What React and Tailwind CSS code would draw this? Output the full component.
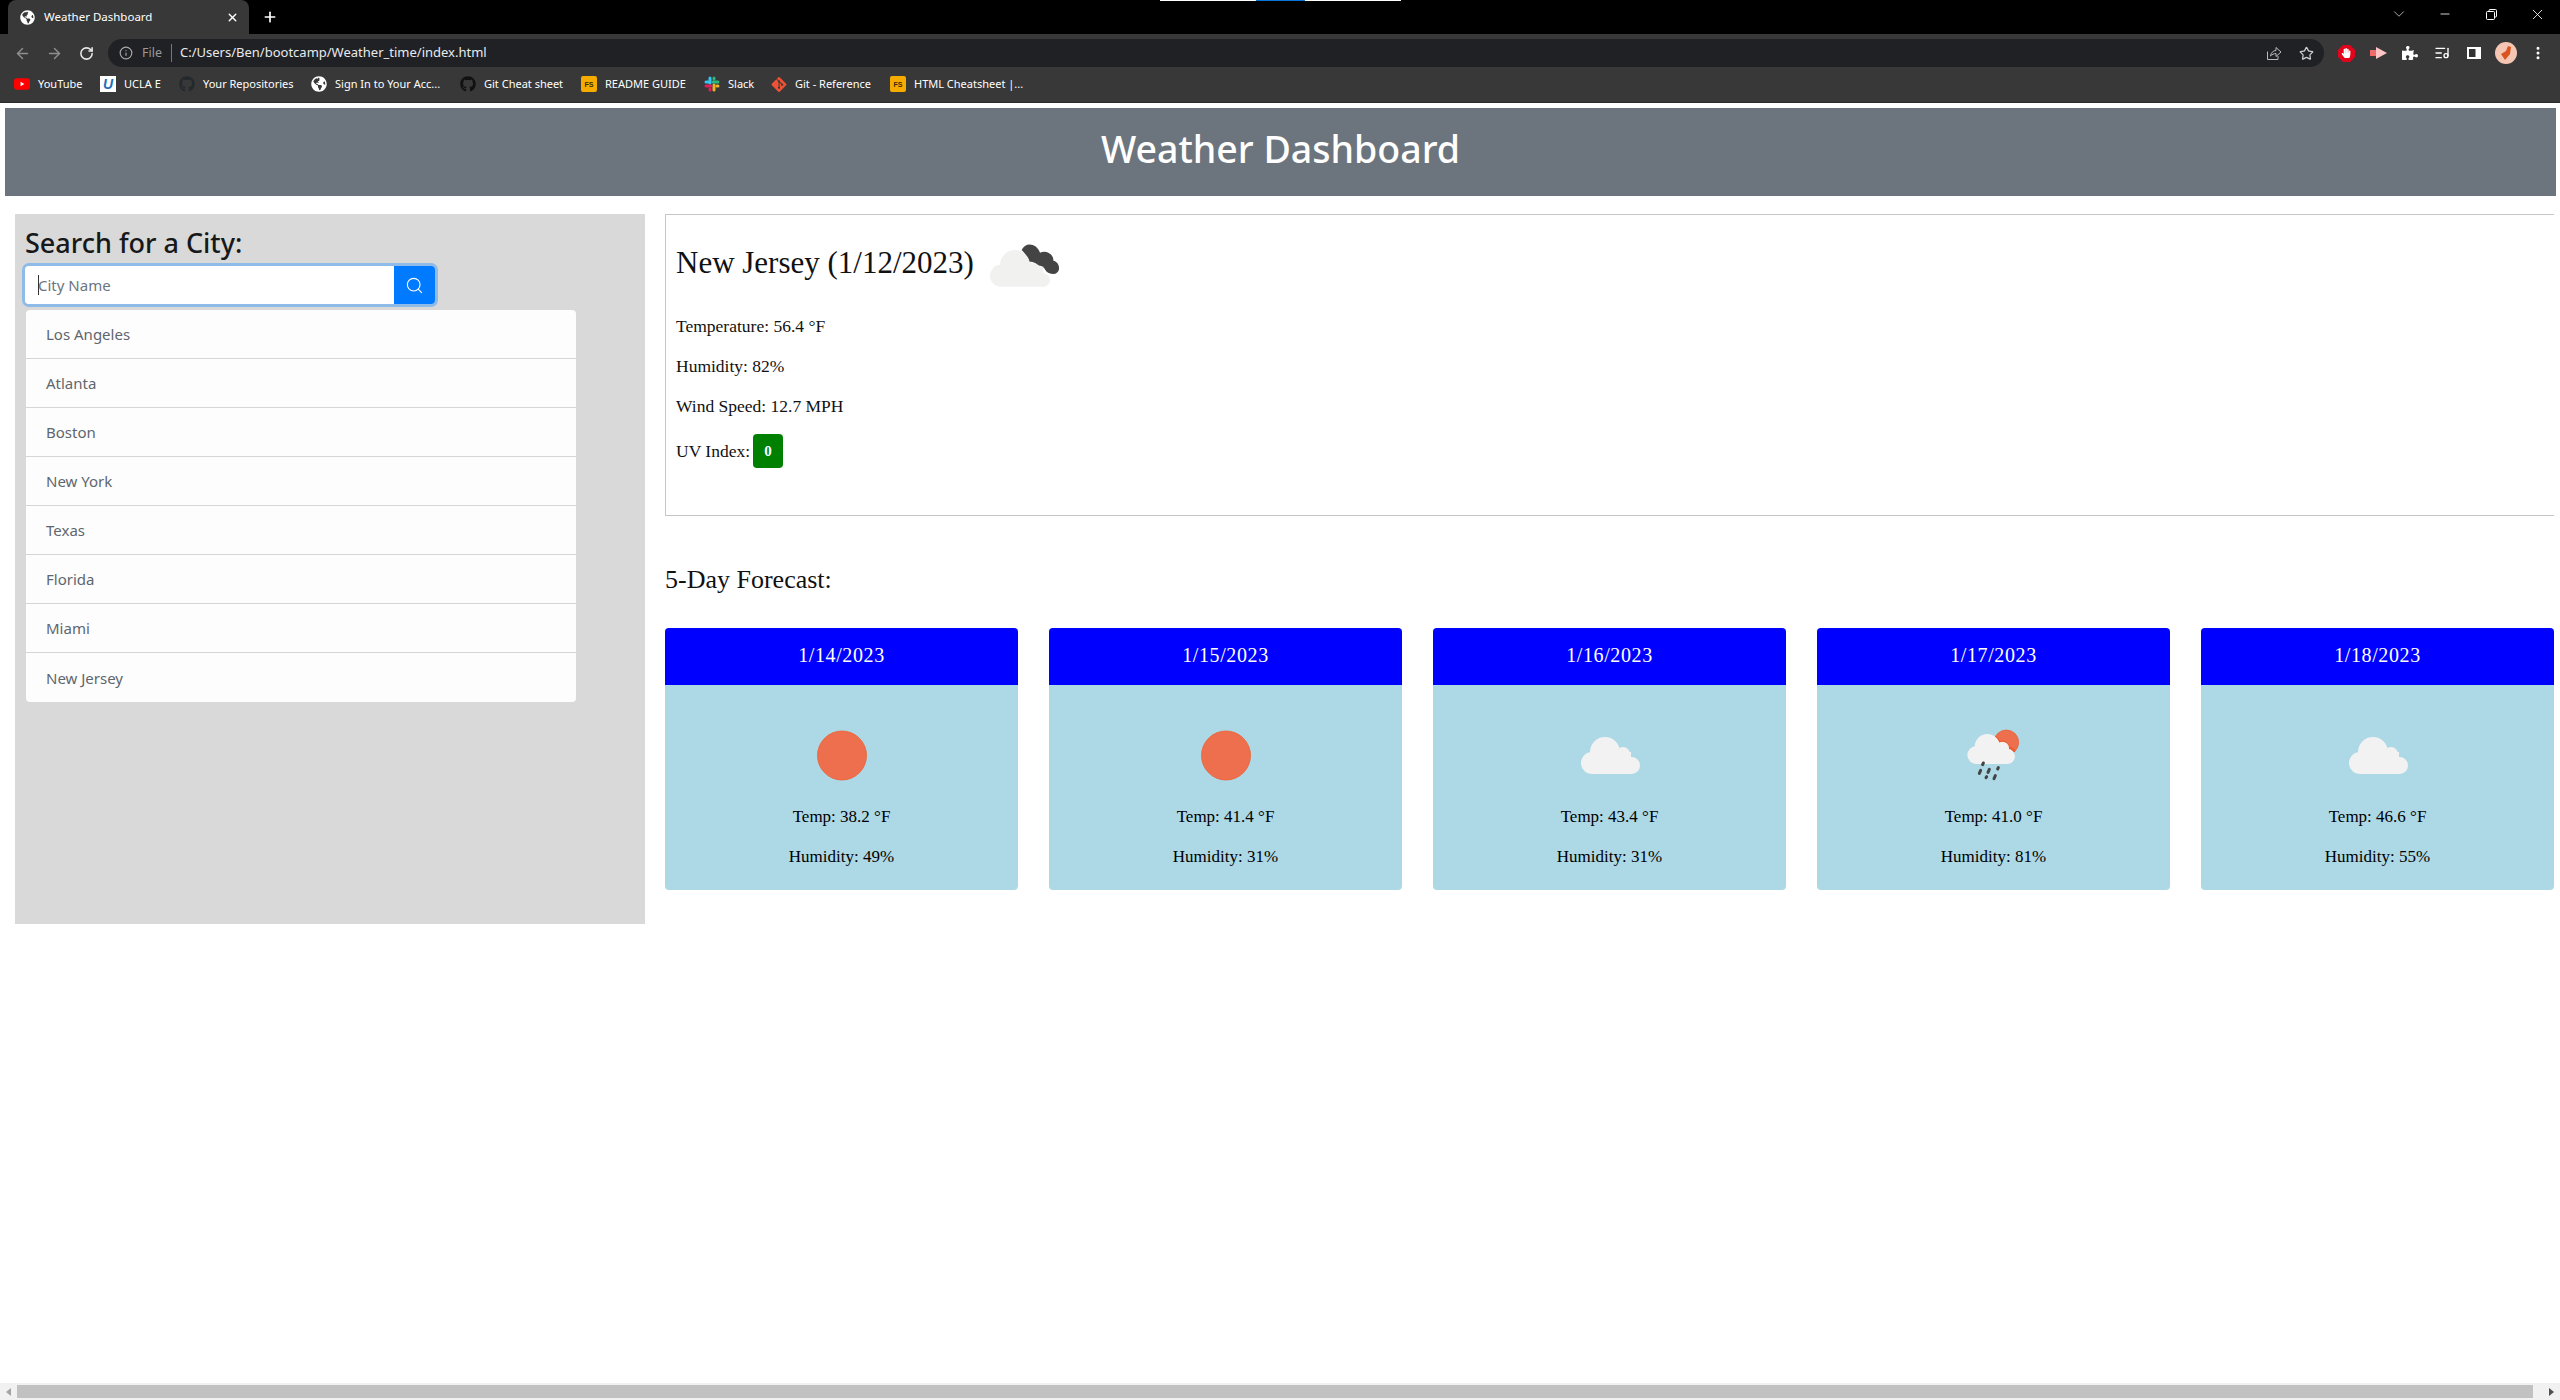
import { ArrowLeft, ArrowRight, RotateCw, Info, Star, X, Plus, Minus, ChevronDown, Search, ListMusic, MoreVertical } from "lucide-react";
import { FaGithub, FaGlobeAmericas, FaGitAlt, FaHandPaper, FaPuzzlePiece } from "react-icons/fa";

const cities = ["Los Angeles", "Atlanta", "Boston", "New York", "Texas", "Florida", "Miami", "New Jersey"];

const YoutubeIcon = () => (
    <svg width="17" height="12" viewBox="0 0 17 12">
        <rect width="17" height="12" rx="3" fill="#ff0000" />
        <polygon points="7,3.5 11,6 7,8.5" fill="#fff" />
    </svg>
);

const UclaIcon = () => (
    <div className="w-4 h-4 bg-white flex items-center justify-center font-['Liberation_Sans',sans-serif] text-[14px] font-bold italic leading-none text-[#1d6fb8]">U</div>
);

const FsIcon = () => (
    <div className="w-4 h-4 bg-[#f5ab00] rounded-[2px] flex items-center justify-center font-['Liberation_Sans',sans-serif] text-[7px] font-bold leading-none text-[#3a2a00]">FS</div>
);

const SlackIcon = () => (
    <svg width="16" height="16" viewBox="0 0 16 16" strokeWidth="3" strokeLinecap="round">
        <line x1="6" y1="2" x2="6" y2="7" stroke="#36c5f0" />
        <line x1="2" y1="6" x2="4" y2="6" stroke="#36c5f0" />
        <line x1="14" y1="6" x2="9" y2="6" stroke="#2eb67d" />
        <line x1="10" y1="2" x2="10" y2="3" stroke="#2eb67d" />
        <line x1="10" y1="14" x2="10" y2="9" stroke="#ecb22e" />
        <line x1="14" y1="10" x2="13" y2="10" stroke="#ecb22e" />
        <line x1="2" y1="10" x2="7" y2="10" stroke="#e01e5a" />
        <line x1="6" y1="14" x2="6" y2="13" stroke="#e01e5a" />
    </svg>
);

const bookmarks = [
    { label: "YouTube", icon: <YoutubeIcon />, width: "w-[46px]" },
    { label: "UCLA E", icon: <UclaIcon />, width: "w-[39px]" },
    { label: "Your Repositories", icon: <FaGithub size={16} color="#24292e" />, width: "w-[92px]" },
    { label: "Sign In to Your Acc...", icon: <FaGlobeAmericas size={16} color="#fff" />, width: "w-[109px]" },
    { label: "Git Cheat sheet", icon: <FaGithub size={16} color="#111" />, width: "w-[81px]" },
    { label: "README GUIDE", icon: <FsIcon />, width: "w-[83px]" },
    { label: "Slack", icon: <SlackIcon />, width: "w-[27px]" },
    { label: "Git - Reference", icon: <FaGitAlt size={17} color="#f05033" />, width: "w-[79px]" },
    { label: "HTML Cheatsheet |...", icon: <FsIcon />, width: "w-[109px]" },
];

const SunIcon = () => (
    <svg width="100" height="100" viewBox="0 0 100 100">
        <circle cx="50" cy="50.5" r="24.5" fill="#ee6f4d" stroke="#ee6233" strokeWidth="0.8" />
    </svg>
);

const CloudIcon = () => (
    <svg width="100" height="100" viewBox="0 0 100 100">
        <g fill="#f2f2f2">
            <circle cx="45" cy="47" r="15" />
            <circle cx="63" cy="49" r="7" />
            <circle cx="32" cy="58" r="11" />
            <circle cx="71.5" cy="60.5" r="8.5" />
            <rect x="32" y="47" width="39" height="22" />
        </g>
    </svg>
);

const RainIcon = () => (
    <svg width="70" height="70" viewBox="0 0 210 210">
        <clipPath id="sunClip">
            <circle cx="142" cy="67" r="38" />
        </clipPath>
        <circle cx="142" cy="67" r="37" fill="#ee6f4d" stroke="#ea5a2a" strokeWidth="2" />
        <g clipPath="url(#sunClip)" fill="#ea5a2a">
            <circle cx="85" cy="80" r="41" />
            <circle cx="130" cy="85" r="23" />
            <circle cx="145" cy="107" r="28" />
        </g>
        <g fill="#f2f2f2">
            <circle cx="85" cy="80" r="38" />
            <circle cx="130" cy="85" r="20" />
            <circle cx="52" cy="105" r="27" />
            <circle cx="145" cy="109" r="23" />
            <rect x="52" y="85" width="93" height="47" />
        </g>
        <g stroke="#444" strokeWidth="9" strokeLinecap="round">
            <line x1="73" y1="129" x2="71" y2="134" />
            <line x1="65" y1="151" x2="61" y2="160" />
            <line x1="91" y1="148" x2="87" y2="157" />
            <line x1="118" y1="143" x2="116" y2="147" />
            <line x1="83" y1="170" x2="81" y2="173" />
            <line x1="109" y1="167" x2="105" y2="176" />
        </g>
    </svg>
);

const CurrentIcon = () => (
    <svg width="90" height="70" viewBox="0 0 270 210" className="ml-[6px] mt-[5px]">
        <path d="M125 60 C135 35 170 38 180 68 C200 58 222 75 220 92 C240 95 245 128 222 132 C210 132 200 128 196 120 C190 105 170 108 168 103 C160 90 145 100 142 92 C140 75 130 65 125 60 Z" fill="#444" />
        <g fill="#f1f1f0">
            <circle cx="105" cy="105" r="45" />
            <circle cx="63" cy="137" r="33" />
            <circle cx="190" cy="150" r="20" />
            <circle cx="155" cy="125" r="28" />
            <rect x="63" y="110" width="127" height="60" />
        </g>
    </svg>
);

const forecast = [
    { date: "1/14/2023", temp: "38.2", humidity: "49", icon: <SunIcon /> },
    { date: "1/15/2023", temp: "41.4", humidity: "31", icon: <SunIcon /> },
    { date: "1/16/2023", temp: "43.4", humidity: "31", icon: <CloudIcon /> },
    { date: "1/17/2023", temp: "41.0", humidity: "81", icon: <RainIcon /> },
    { date: "1/18/2023", temp: "46.6", humidity: "55", icon: <CloudIcon /> },
];

const BrowserChrome = () => (
    <div className="font-['Noto_Sans',sans-serif] text-white">
        {/* Tab strip */}
        <div className="relative h-[34px] bg-black flex pl-[8px]">
            <div className="absolute top-0 left-[1160px] flex h-px">
                <div className="w-[96px] bg-white" />
                <div className="w-[49px] bg-[#0a74d8]" />
                <div className="w-[96px] bg-white" />
            </div>
            <div className="w-[241px] bg-[#383838] rounded-t-lg flex items-center pl-[12px] pr-[10px]">
                <FaGlobeAmericas size={15} color="#fff" />
                <span className="ml-[9px] text-[11.5px] whitespace-nowrap">Weather Dashboard</span>
                <X size={13} strokeWidth={2.5} className="ml-auto" />
            </div>
            <div className="w-[42px] flex items-center justify-center">
                <Plus size={16} strokeWidth={2.5} />
            </div>
            <div className="ml-auto flex h-[28px] text-white">
                <div className="w-[46px] flex items-center justify-center text-[#bbb]"><ChevronDown size={18} strokeWidth={1.2} /></div>
                <div className="w-[46px] flex items-center justify-center"><Minus size={14} strokeWidth={1.4} /></div>
                <div className="w-[46px] flex items-center justify-center">
                    <svg width="11" height="11" viewBox="0 0 11 11" fill="none" stroke="#fff">
                        <rect x="0.5" y="2.5" width="8" height="8" rx="1" />
                        <path d="M3 2.5V1.5a1 1 0 0 1 1-1h5.5a1 1 0 0 1 1 1V7a1 1 0 0 1-1 1H8.500" />
                    </svg>
                </div>
                <div className="w-[46px] flex items-center justify-center"><X size={17} strokeWidth={1.2} /></div>
            </div>
        </div>

        {/* Address bar */}
        <div className="h-[34px] bg-[#383838] flex pt-[4px] pl-[6px] pr-[6px] items-center">
            <div className="w-[32px] flex justify-center text-[#8f8f8f]"><ArrowLeft size={17} /></div>
            <div className="w-[32px] flex justify-center text-[#8f8f8f]"><ArrowRight size={17} /></div>
            <div className="w-[32px] flex justify-center text-[#e8e8e8]"><RotateCw size={15} strokeWidth={2.5} /></div>
            <div className="flex-1 h-[28px] ml-[6px] mr-[6px] bg-[#202124] rounded-full flex items-center pl-[11px] pr-[2px]">
                <Info size={14} className="text-[#a8a8a8]" />
                <span className="ml-[9px] text-[12.5px] text-[#9a9a9a]">File</span>
                <div className="ml-[9px] w-px h-[18px] bg-[#777]" />
                <span className="ml-[8px] text-[13px] text-[#e8eaed]">C:/Users/Ben/bootcamp/Weather_time/index.html</span>
                <div className="ml-auto w-[32px] flex justify-center">
                    <svg width="16" height="16" viewBox="0 0 16 16" fill="none" stroke="#bbb" strokeWidth="1">
                        <path d="M1.500 6.500V14.500H12V11" />
                        <path d="M4.500 11C5 7.500 7.500 5.500 10 5.500V2.500L15 7L10 11.500V8.500C8 8.500 6 9.500 4.500 11Z" />
                    </svg>
                </div>
                <div className="w-[32px] flex justify-center text-[#cfcfcf]"><Star size={15} /></div>
            </div>
            <div className="w-[32px] flex justify-center">
                <div className="relative w-[17px] h-[17px] flex items-center justify-center">
                    <svg width="17" height="17" viewBox="0 0 17 17" className="absolute inset-0">
                        <polygon points="5,0 12,0 17,5 17,12 12,17 5,17 0,12 0,5" fill="#e2041b" />
                    </svg>
                    <FaHandPaper size={10} color="#fff" className="relative" />
                </div>
            </div>
            <div className="w-[32px] flex justify-center">
                <svg width="17" height="12" viewBox="0 0 17 12">
                    <rect x="0" y="3" width="8" height="6" fill="#f06a6a" />
                    <polygon points="6,0 17,6 6,12" fill="#ffc4c4" />
                </svg>
            </div>
            <div className="w-[32px] flex justify-center"><FaPuzzlePiece size={16} color="#fff" /></div>
            <div className="w-[32px] flex justify-center"><ListMusic size={16} color="#fff" /></div>
            <div className="w-[32px] flex justify-center">
                <svg width="14" height="12" viewBox="0 0 14 12">
                    <rect width="14" height="12" fill="#fff" />
                    <rect x="2" y="2" width="6.500" height="8" fill="#333" />
                </svg>
            </div>
            <div className="w-[32px] flex justify-center">
                <svg width="22" height="22" viewBox="0 0 22 22">
                    <circle cx="11" cy="11" r="11" fill="#f5c6b4" />
                    <polygon points="13,4 16,5 15,12 10,18 6,12 11,9" fill="#d9541e" />
                </svg>
            </div>
            <div className="w-[32px] flex justify-center"><MoreVertical size={16} color="#fff" strokeWidth={2.5} /></div>
        </div>

        {/* Bookmarks */}
        <div className="h-[35px] bg-[#383838] border-b border-[#2a2a2a] flex items-center pl-[14px] pb-[2px] gap-[16px] text-[11px]">
            {bookmarks.map((b) => (
                <div key={b.label} className="flex items-center gap-[8px]">
                    <div className="w-[16px] flex justify-center">{b.icon}</div>
                    <span className={`${b.width} whitespace-nowrap`}>{b.label}</span>
                </div>
            ))}
        </div>
    </div>
);

const Sidebar = () => (
    <aside className="w-[630px] h-[710px] bg-[#d9d9d9] px-[10px] pt-[12px] font-['Noto_Sans',sans-serif]">
        <h3 className="text-[27px] leading-[34px] text-[#16181a] font-medium">Search for a City:</h3>
        <div className="mt-[6px] w-[410px] h-[38px] flex rounded ring-[3px] ring-[#8fbbe9]">
            <div className="relative flex-1">
                <input
                    type="text"
                    placeholder="City Name"
                    className="w-full h-full bg-white rounded-l pl-[13px] text-[15px] text-[#495057] placeholder:text-[#6c757d] outline-none"
                />
                <div className="absolute left-[13px] top-[9px] w-px h-[20px] bg-[#333]" />
            </div>
            <button type="button" className="w-[41px] bg-[#007bff] rounded-r flex items-center justify-center text-white">
                <Search size={19} strokeWidth={1.4} />
            </button>
        </div>
        <ul className="mt-[6px] ml-px w-[550px] rounded bg-[#fdfdfd] text-[15px] text-[#5f666d]">
            {cities.map((city, i) => (
                <li key={city} className={`h-[49px] pl-[20px] pt-[1px] flex items-center ${i < cities.length - 1 ? "border-b border-[#d6d6d6]" : ""}`}>
                    {city}
                </li>
            ))}
        </ul>
    </aside>
);

const ForecastCard = ({ day }) => (
    <div className="flex-1 h-[262px] bg-[#add8e6] rounded overflow-hidden text-center text-[17px] leading-[24px] text-black">
        <div className="h-[57px] pb-[3px] bg-[#0000ff] text-white text-[20px] tracking-[0.6px] flex items-center justify-center">{day.date}</div>
        <div className="h-[100px] mt-[20px] flex items-center justify-center">{day.icon}</div>
        <p>Temp: {day.temp} °F</p>
        <p className="mt-[16px]">Humidity: {day.humidity}%</p>
    </div>
);

const App = () => {
    return (
        <div className="relative w-full h-[1400px] flex flex-col overflow-hidden bg-white">
            <BrowserChrome />

            <header className="mt-[5px] ml-[5px] mr-[4px] h-[88px] pb-[6px] bg-[#6c757d] flex items-center justify-center font-['Noto_Sans',sans-serif] text-[37.500px] font-medium text-white">
                Weather Dashboard
            </header>

            <div className="mt-[18px] pl-[15px] pr-[6px] flex gap-[20px]">
                <Sidebar />

                <main className="flex-1 font-['Liberation_Serif',serif] text-[#111]">
                    <section className="h-[302px] border border-r-0 border-[#c6c6c6] pl-[10px]">
                        <div className="h-[94px] flex items-center">
                            <h2 className="text-[31px] leading-none whitespace-nowrap">New Jersey (1/12/2023)</h2>
                            <CurrentIcon />
                        </div>
                        <div className="mt-[5px] text-[17.500px] leading-[24px] flex flex-col gap-[16px]">
                            <p>Temperature: 56.4 °F</p>
                            <p>Humidity: 82%</p>
                            <p>Wind Speed: 12.7 MPH</p>
                            <div className="flex items-center gap-[3px]">
                                <span>UV Index:</span>
                                <span className="w-[30px] h-[34px] rounded bg-[#008000] text-white text-[15px] font-bold flex items-center justify-center">0</span>
                            </div>
                        </div>
                    </section>

                    <h3 className="mt-[48px] text-[26px] leading-[32px]">5-Day Forecast:</h3>

                    <div className="mt-[32px] flex gap-[31px]">
                        {forecast.map((day) => (
                            <ForecastCard key={day.date} day={day} />
                        ))}
                    </div>
                </main>
            </div>

            {/* Horizontal scrollbar */}
            <div className="mt-auto h-[17px] bg-[#f1f1f1] flex items-center">
                <div className="w-[17px] flex justify-center">
                    <svg width="5" height="8" viewBox="0 0 5 8"><polygon points="5,0 5,8 0,4" fill="#a3a3a3" /></svg>
                </div>
                <div className="flex-1 h-[13px] bg-[#c1c1c1]" />
                <div className="w-[27px] flex justify-end pr-[6px]">
                    <svg width="5" height="8" viewBox="0 0 5 8"><polygon points="0,0 0,8 5,4" fill="#505050" /></svg>
                </div>
            </div>
        </div>
    );
};

export default App;
